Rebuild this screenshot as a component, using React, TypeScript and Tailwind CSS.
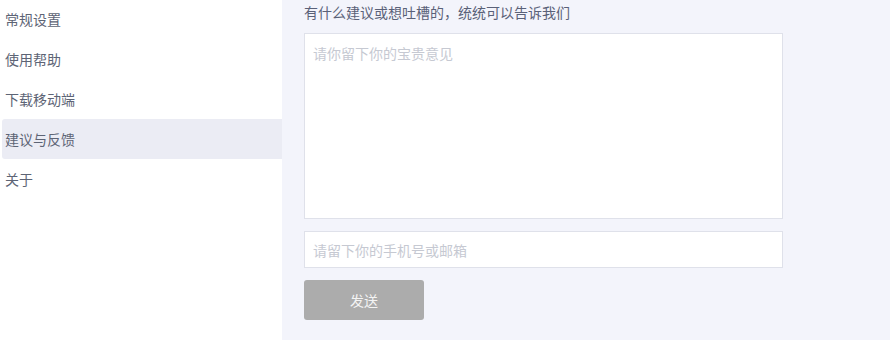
import React from "react";

const items = ["常规设置", "使用帮助", "下载移动端", "建议与反馈", "关于"];

export default function App() {
  return (
    <div
      className="flex h-[340px] w-[890px] overflow-hidden bg-[#f3f4fb] text-[14px]"
      style={{ fontFamily: '"Microsoft YaHei", "Noto Sans CJK SC", sans-serif' }}
    >
      <div className="w-[282px] shrink-0 bg-white">
        <div className="-mt-px flex flex-col">
          {items.map((t, i) => (
            <div
              key={t}
              className={
                "ml-[2px] flex h-10 items-center pl-[3px] text-[#5d6475] " +
                (i === 3 ? "rounded-l-[3px] bg-[#ebecf4]" : "")
              }
            >
              {t}
            </div>
          ))}
        </div>
      </div>
      <div className="flex w-[479px] flex-col pl-[22px] box-content">
        <div className="flex h-[25px] items-center pb-[1px] leading-5 text-[#5a6178]">
          有什么建议或想吐槽的，统统可以告诉我们
        </div>
        <textarea
          className="mt-[8px] h-[186px] w-full resize-none border border-[#dfe1ea] bg-white px-[8px] py-[9px] leading-5 text-[#5d6475] outline-none placeholder:text-[#c6c9d2]"
          placeholder="请你留下你的宝贵意见"
        />
        <input
          className="mt-[12px] h-[37px] w-full border border-[#dfe1ea] bg-white px-[8px] leading-5 text-[#5d6475] outline-none placeholder:text-[#c6c9d2]"
          placeholder="请留下你的手机号或邮箱"
        />
        <button className="mt-[12px] flex h-10 w-[120px] items-center justify-center rounded-[3px] bg-[#acacac] text-[#f4f4f4]">
          发送
        </button>
      </div>
    </div>
  );
}
